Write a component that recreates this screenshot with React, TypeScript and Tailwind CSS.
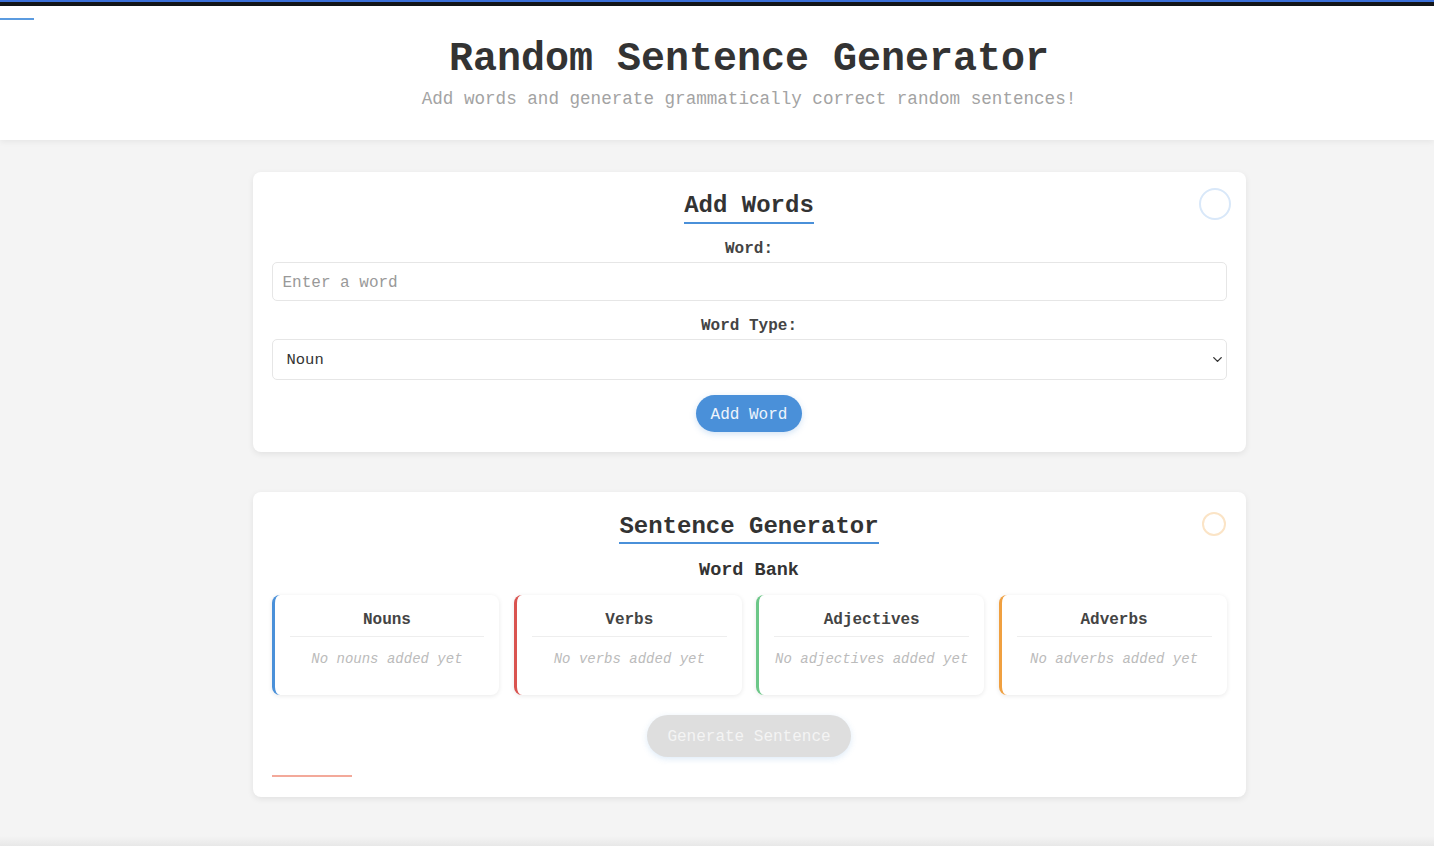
import React from "react";
import { ChevronDown } from "lucide-react";

const mono = { fontFamily: '"Liberation Mono", "Courier New", monospace' };

const banks = [
    { title: "Nouns", empty: "No nouns added yet", border: "border-l-[#4a90d9]" },
    { title: "Verbs", empty: "No verbs added yet", border: "border-l-[#d9534f]" },
    { title: "Adjectives", empty: "No adjectives added yet", border: "border-l-[#6cc788]" },
    { title: "Adverbs", empty: "No adverbs added yet", border: "border-l-[#f0a040]" },
];

export default function App() {
    return (
        <div style={mono} className="min-h-screen bg-[#f4f4f4] flex flex-col text-[#333]">
            {/* top bar */}
            <div className="h-[2px] bg-[#3b6fd8]" />
            <div className="h-[4px] bg-[#141618]" />

            {/* header */}
            <header className="relative bg-white shadow-[0_2px_6px_rgba(0,0,0,0.06)] pl-[64px] pt-[30px] h-[134px]">
                <div className="absolute left-0 top-[12px] h-[2px] w-[34px] bg-[#5b9be0]" />
                <h1 className="text-center text-[40px] leading-[48px] font-bold text-[#333]">Random Sentence Generator</h1>
                <p className="text-center text-[17.6px] leading-[22px] mt-[4px] text-[#a3a3a3]">
                    Add words and generate grammatically correct random sentences!
                </p>
            </header>

            <main className="flex-1 pl-[64px] pt-[32px] pb-[38px]">
                <div className="w-[993px] mx-auto flex flex-col gap-[40px]">
                    {/* Add words */}
                    <section className="relative bg-white rounded-[8px] shadow-[0_2px_6px_rgba(0,0,0,0.08)] px-[19px] pt-[19px] pb-[20px] flex flex-col items-center">
                        <div className="absolute right-[15px] top-[16px] w-[32px] h-[32px] rounded-full border-2 border-[#d9e8f9]" />
                        <h2 className="text-[24px] leading-[29px] font-bold text-[#333] border-b-2 border-[#4a90d9] pb-[2px]">Add Words</h2>
                        <label className="mt-[15px] text-[16px] leading-[20px] font-bold text-[#444]">Word:</label>
                        <div className="mt-[3px] w-full h-[39px] border border-[#e6e6e6] rounded-[5px] flex items-center px-[10px] pt-[2px] text-[16px] text-[#999]">
                            Enter a word
                        </div>
                        <label className="mt-[15px] text-[16px] leading-[20px] font-bold text-[#444]">Word Type:</label>
                        <div className="mt-[3px] w-full h-[41px] border border-[#e6e6e6] rounded-[5px] flex items-center justify-between pl-[14px] pr-[1px] text-[15.5px] text-[#333]">
                            <span className="pt-[2px]">Noun</span>
                            <ChevronDown className="w-[15px] h-[15px] text-[#333]" strokeWidth={2.2} />
                        </div>
                        <button className="mt-[15px] h-[37px] px-[15px] pt-[2px] rounded-full bg-[#4a90d9] text-[#eef4fc] text-[16px] shadow-[0_2px_6px_rgba(74,144,217,0.25)]">
                            Add Word
                        </button>
                    </section>

                    {/* Sentence generator */}
                    <section className="relative bg-white rounded-[8px] shadow-[0_2px_6px_rgba(0,0,0,0.08)] px-[19px] pt-[20px] pb-[20px] flex flex-col items-center">
                        <div className="absolute right-[20px] top-[20px] w-[24px] h-[24px] rounded-full border-2 border-[#fbe4c6]" />
                        <h2 className="text-[24px] leading-[29px] font-bold text-[#333] border-b-2 border-[#4a90d9] pb-[1px]">Sentence Generator</h2>
                        <h3 className="mt-[16px] text-[18.5px] leading-[22px] font-bold text-[#333]">Word Bank</h3>
                        <div className="mt-[13px] w-full grid grid-cols-4 gap-[14.5px]">
                            {banks.map((b) => (
                                <div key={b.title} className={`h-[100px] bg-white rounded-[8px] border-l-[3px] ${b.border} shadow-[0_1px_5px_rgba(0,0,0,0.09)] px-[15px] pt-[16px]`}>
                                    <div className="text-center text-[16px] leading-[18px] font-bold text-[#444] pb-[7px] border-b border-[#eee]">{b.title}</div>
                                    <div className="text-center text-[14px] leading-[18px] italic text-[#bbb] mt-[13px]">{b.empty}</div>
                                </div>
                            ))}
                        </div>
                        <button className="mt-[20px] h-[42px] px-[20px] pt-[2px] rounded-full bg-[#dedede] text-[#f4f4f4] text-[16px] shadow-[0_2px_6px_rgba(74,144,217,0.18)]">
                            Generate Sentence
                        </button>
                        <div className="self-start mt-[18px] h-[2px] w-[80px] bg-[#f3a99a]" />
                    </section>
                </div>
            </main>
            <div className="h-[10px] bg-gradient-to-b from-[#f4f4f4] to-[#e8e8e8]" />
        </div>
    );
}
